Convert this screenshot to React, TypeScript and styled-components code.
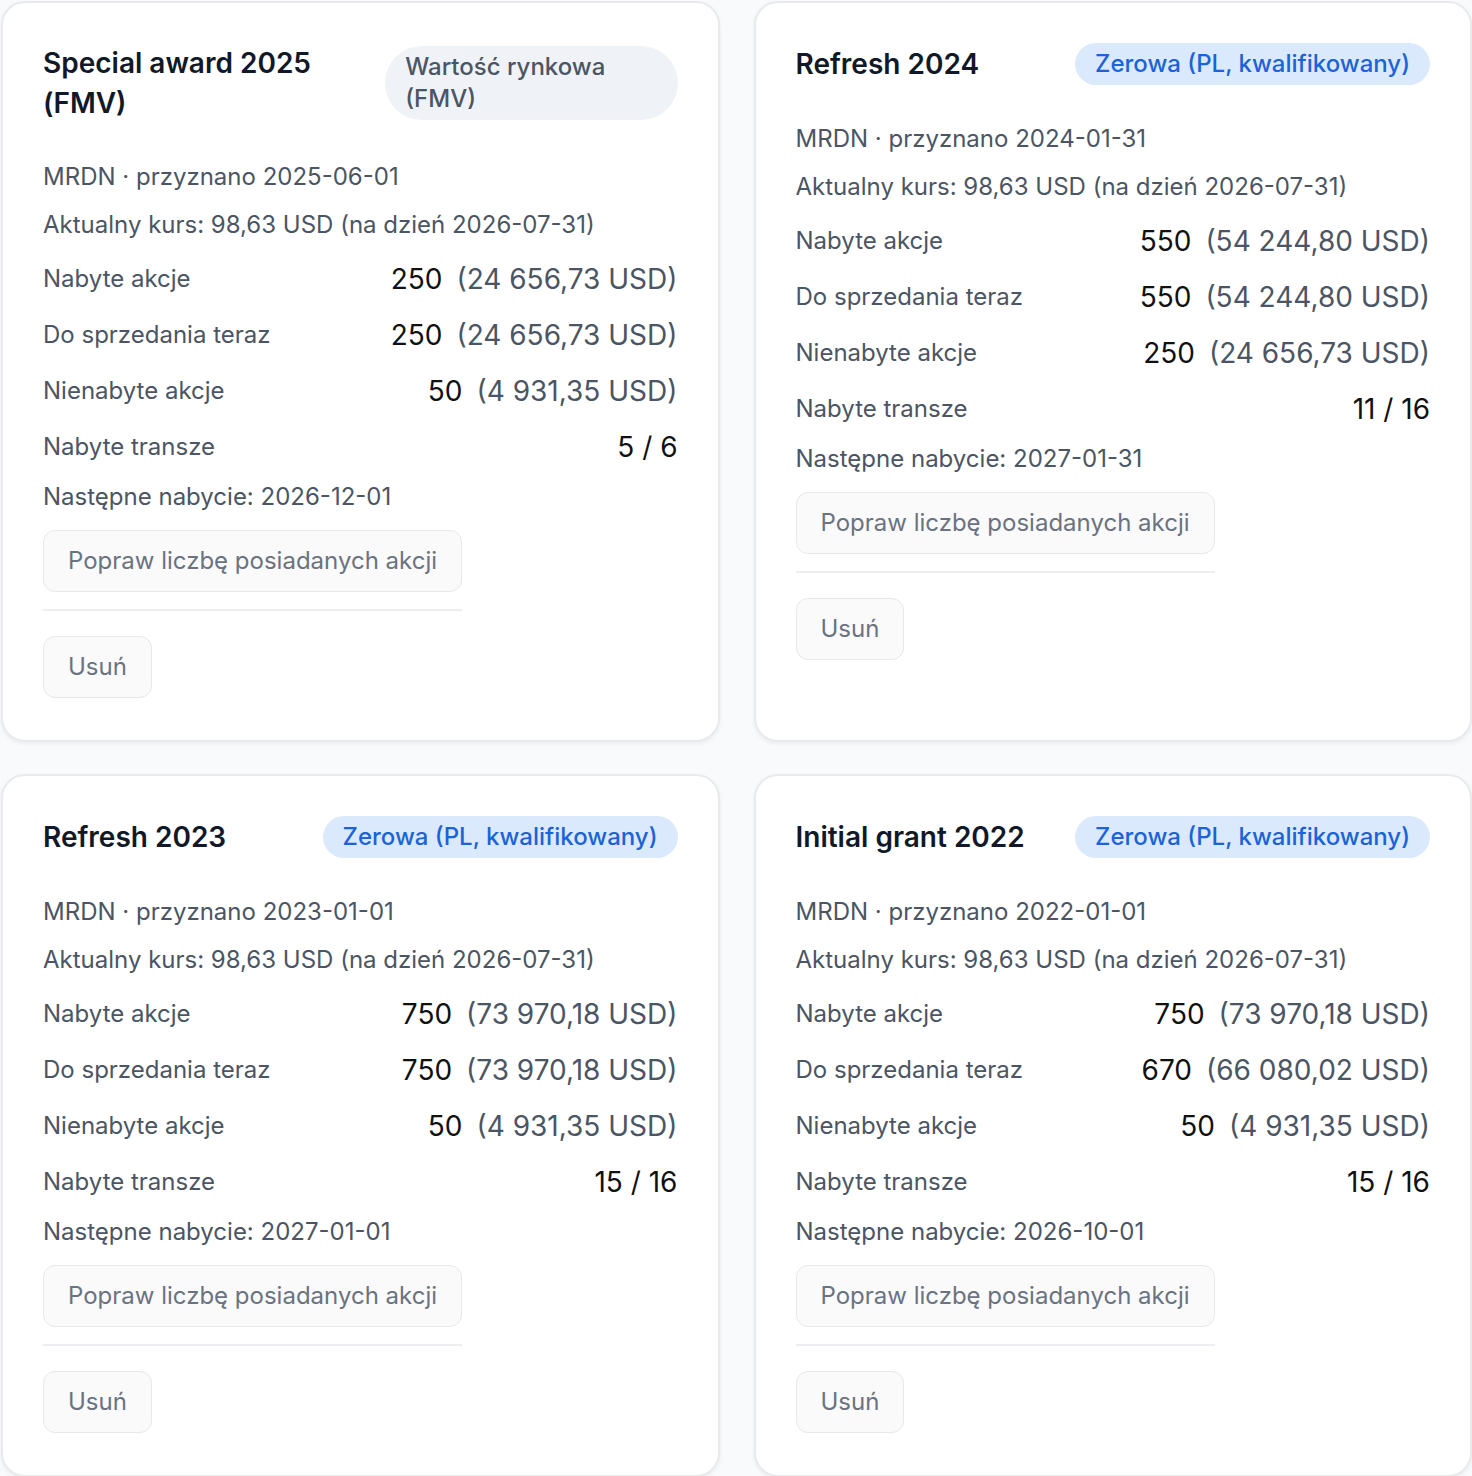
import styled, { createGlobalStyle } from 'styled-components'

type Holding = {
  shares: string
  value?: string
}

type Grant = {
  title: string
  badge: string
  tone: 'gray' | 'blue'
  granted: string
  acquired: Holding
  sellable: Holding
  unvested: Holding
  tranches: string
  next: string
}

const grants: Grant[] = [
  {
    title: 'Special award 2025 (FMV)',
    badge: 'Wartość rynkowa (FMV)',
    tone: 'gray',
    granted: '2025-06-01',
    acquired: { shares: '250', value: '24 656,73 USD' },
    sellable: { shares: '250', value: '24 656,73 USD' },
    unvested: { shares: '50', value: '4 931,35 USD' },
    tranches: '5 / 6',
    next: '2026-12-01',
  },
  {
    title: 'Refresh 2024',
    badge: 'Zerowa (PL, kwalifikowany)',
    tone: 'blue',
    granted: '2024-01-31',
    acquired: { shares: '550', value: '54 244,80 USD' },
    sellable: { shares: '550', value: '54 244,80 USD' },
    unvested: { shares: '250', value: '24 656,73 USD' },
    tranches: '11 / 16',
    next: '2027-01-31',
  },
  {
    title: 'Refresh 2023',
    badge: 'Zerowa (PL, kwalifikowany)',
    tone: 'blue',
    granted: '2023-01-01',
    acquired: { shares: '750', value: '73 970,18 USD' },
    sellable: { shares: '750', value: '73 970,18 USD' },
    unvested: { shares: '50', value: '4 931,35 USD' },
    tranches: '15 / 16',
    next: '2027-01-01',
  },
  {
    title: 'Initial grant 2022',
    badge: 'Zerowa (PL, kwalifikowany)',
    tone: 'blue',
    granted: '2022-01-01',
    acquired: { shares: '750', value: '73 970,18 USD' },
    sellable: { shares: '670', value: '66 080,02 USD' },
    unvested: { shares: '50', value: '4 931,35 USD' },
    tranches: '15 / 16',
    next: '2026-10-01',
  },
]

const GlobalStyle = createGlobalStyle`
  html, body {
    margin: 0;
    background: #f9fafb;
    font-family: Inter, "Noto Sans", "Liberation Sans", sans-serif;
    -webkit-font-smoothing: antialiased;
  }
`

const Grid = styled.div`
  display: grid;
  grid-template-columns: 1fr 1fr;
  gap: 32px 34px;
  padding: 1px 0 1px 1px;
`

const Card = styled.section`
  display: flex;
  flex-direction: column;
  gap: 16px;
  background: #fff;
  border: 2px solid #e8eaee;
  border-radius: 24px;
  padding: 40px 40px 42px;
  box-shadow: 0 2px 4px rgba(17, 24, 39, 0.06);
`

const Header = styled.div`
  display: flex;
  align-items: center;
  justify-content: space-between;
  gap: 16px;
  margin-bottom: 22px;
`

const Title = styled.h3`
  margin: 0;
  font-size: 28px;
  line-height: 40px;
  font-weight: 600;
  color: #111827;
`

const Badge = styled.span<{ $tone: 'gray' | 'blue' }>`
  padding: 5px 20px;
  border-radius: 999px;
  font-size: 24px;
  line-height: 32px;
  font-weight: 500;
  background: ${(p) => (p.$tone === 'blue' ? '#dbe9fc' : '#eff2f6')};
  color: ${(p) => (p.$tone === 'blue' ? '#1b63d6' : '#4b5563')};
`

const Meta = styled.div`
  font-size: 24px;
  line-height: 32px;
  color: #4b5563;
`

const Stats = styled.div`
  display: flex;
  flex-direction: column;
  gap: 16px;
  margin: 2px 0 -2px;
`

const Row = styled.div`
  display: flex;
  align-items: center;
  justify-content: space-between;
  height: 40px;
`

const Label = styled.span`
  font-size: 24px;
  line-height: 32px;
  color: #4b5563;
`

const Value = styled.span`
  font-size: 28px;
  line-height: 40px;
  color: #111;
`

const Amount = styled.span`
  margin-left: 14px;
  color: #4b5563;
`

const Actions = styled.div`
  display: flex;
  flex-direction: column;
  align-items: flex-start;
  width: fit-content;
  margin-top: 1px;
`

const Footer = styled.div`
  align-self: stretch;
  margin-top: 17px;
  padding-top: 25px;
  border-top: 2px solid #eceef1;
`

const Button = styled.button`
  font-family: inherit;
  font-size: 24px;
  line-height: 32px;
  color: #6b7280;
  background: #fafafa;
  border: 1px solid #e7e8eb;
  border-radius: 12px;
  padding: 14px 24px;
  cursor: pointer;
`

const Stat = ({ label, holding }: { label: string; holding: Holding }) => (
  <Row>
    <Label>{label}</Label>
    <Value>
      {holding.shares}
      {holding.value && <Amount>({holding.value})</Amount>}
    </Value>
  </Row>
)

const GrantCard = ({ grant }: { grant: Grant }) => (
  <Card>
    <Header>
      <Title>{grant.title}</Title>
      <Badge $tone={grant.tone}>{grant.badge}</Badge>
    </Header>
    <Meta>MRDN · przyznano {grant.granted}</Meta>
    <Meta>Aktualny kurs: 98,63 USD (na dzień 2026-07-31)</Meta>
    <Stats>
      <Stat label="Nabyte akcje" holding={grant.acquired} />
      <Stat label="Do sprzedania teraz" holding={grant.sellable} />
      <Stat label="Nienabyte akcje" holding={grant.unvested} />
      <Stat label="Nabyte transze" holding={{ shares: grant.tranches }} />
    </Stats>
    <Meta>Następne nabycie: {grant.next}</Meta>
    <Actions>
      <Button>Popraw liczbę posiadanych akcji</Button>
      <Footer>
        <Button>Usuń</Button>
      </Footer>
    </Actions>
  </Card>
)

export default function App() {
  return (
    <>
      <GlobalStyle />
      <Grid>
        {grants.map((g) => (
          <GrantCard key={g.title} grant={g} />
        ))}
      </Grid>
    </>
  )
}
